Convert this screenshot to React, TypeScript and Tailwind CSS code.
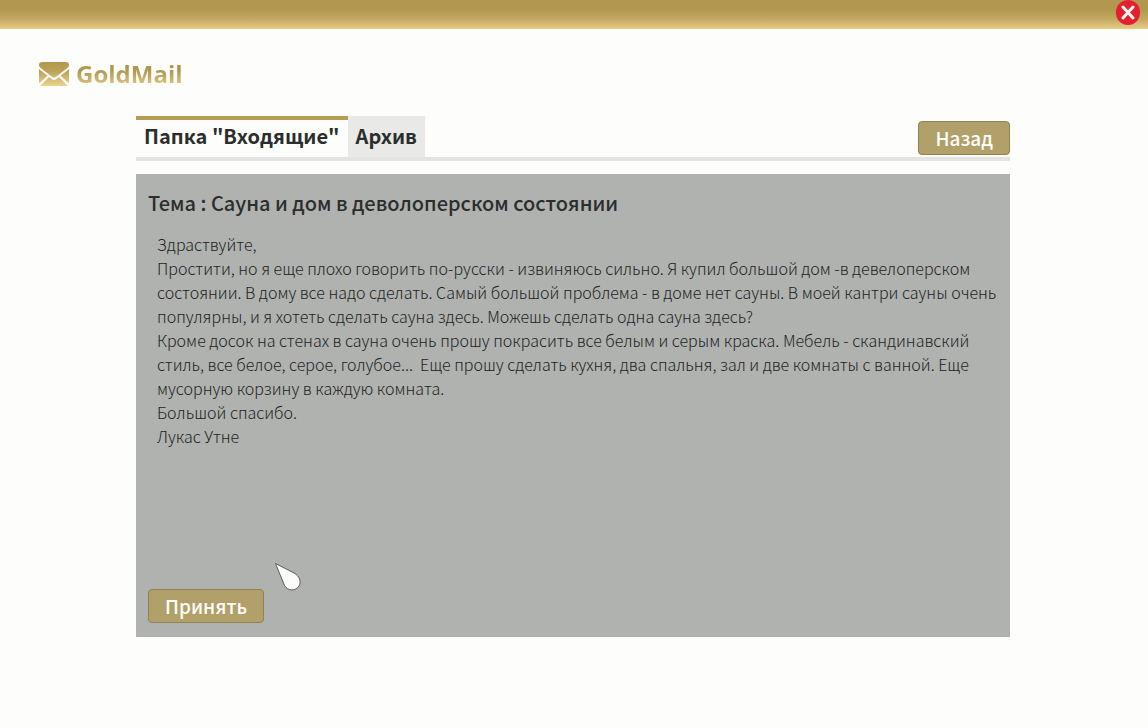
import { useState } from "react";
import clsx from "clsx";

interface IMessage {
  subject: string;
  lines: string[];
}

const message: IMessage = {
  subject: "Сауна и дом в деволоперском состоянии",
  lines: [
    "Здраствуйте,",
    "Простити, но я еще плохо говорить по-русски - извиняюсь сильно. Я купил большой дом -в девелоперском состоянии. В дому все надо сделать. Самый большой проблема - в доме нет сауны. В моей кантри сауны очень популярны, и я хотеть сделать сауна здесь. Можешь сделать одна сауна здесь?",
    "Кроме досок на стенах в сауна очень прошу покрасить все белым и серым краска. Мебель - скандинавский стиль, все белое, серое, голубое...  Еще прошу сделать кухня, два спальня, зал и две комнаты с ванной. Еще мусорную корзину в каждую комната.",
    "Большой спасибо.",
    "Лукас Утне",
  ],
};

const tabs = [
  { id: "inbox", label: 'Папка "Входящие"' },
  { id: "archive", label: "Архив" },
];

function EnvelopeIcon() {
  return (
    <svg width="30" height="24" viewBox="0 0 30 24" aria-hidden="true">
      <defs>
        <linearGradient id="gold" x1="0" y1="0" x2="0" y2="24" gradientUnits="userSpaceOnUse">
          <stop offset="0" stopColor="#b2984d" />
          <stop offset="0.4" stopColor="#bda35a" />
          <stop offset="1" stopColor="#ecd48e" />
        </linearGradient>
      </defs>
      <g fill="url(#gold)">
        <path d="M3 0H27Q30 0 30 3Q30 4.800 28.500 6L17.500 14.500Q15 16.300 12.500 14.500L1.500 6Q0 4.800 0 3Q0 0 3 0Z" />
        <path d="M0 7L8.500 13.800L0 21.500Z" />
        <path d="M30 7L21.500 13.800L30 21.500Z" />
        <path d="M10 15L12.500 17Q15 18.800 17.500 17L20 15L29 24H1Z" />
      </g>
    </svg>
  );
}

function GoldButton({ children }: { children: string }) {
  return (
    <button
      type="button"
      className="h-[34px] rounded-sm border border-[#8f8354] bg-[#b1a069] px-4 text-[19px] leading-8 font-medium text-[#fefefc]"
    >
      {children}
    </button>
  );
}

export default function App() {
  const [activeTab, setActiveTab] = useState("inbox");

  return (
    <div className="flex min-h-screen flex-col bg-[#fdfefc] font-['Noto_Sans_CJK_SC','Noto_Sans',sans-serif] text-[#2b2e2d]">
      {/* Window bar */}
      <header className="flex h-[29px] justify-end bg-linear-to-b from-[#b2984e] from-30% via-[#c2a75f] via-65% to-[#e6cc85] pr-2">
        <button
          type="button"
          aria-label="Закрыть"
          className="flex h-[25px] w-6 items-center justify-center rounded-full bg-[#e3202f]"
        >
          <svg width="14" height="16" viewBox="0 0 14 16" fill="none" stroke="#fdf4f2" strokeWidth="3" strokeLinecap="round">
            <path d="M2 2L12 13M12 2L2 13" />
          </svg>
        </button>
      </header>

      {/* Logo */}
      <div className="flex items-center gap-[7px] pt-[29px] pl-[39px]">
        <EnvelopeIcon />
        <span className="bg-linear-to-b from-[#b09852] from-40% to-[#e3cb86] to-90% bg-clip-text font-['Open_Sans','Noto_Sans',sans-serif] text-[24px] leading-8 font-bold text-transparent">
          GoldMail
        </span>
      </div>

      <main className="flex flex-1 flex-col pt-[26px] pr-[138px] pb-[91px] pl-[136px]">
        <nav className="flex items-end justify-between border-b-4 border-[#e3e3e1]">
          <div className="flex">
            {tabs.map((tab) => (
              <button
                key={tab.id}
                type="button"
                onClick={() => setActiveTab(tab.id)}
                className={clsx(
                  "h-[41px] border-t-4 px-2 pb-[6px] text-[20px] leading-[30px] font-bold",
                  activeTab === tab.id
                    ? "border-[#b59d54]"
                    : "border-[#e9e9e8] bg-[#e9e9e8]",
                )}
              >
                {tab.label}
              </button>
            ))}
          </div>
          <div className="flex pb-[2px]">
            <GoldButton>Назад</GoldButton>
          </div>
        </nav>

        {/* Opened message */}
        <article className="relative mt-[13px] flex flex-1 flex-col items-start bg-[#b0b2af] pt-[11px] pr-1 pb-[14px] pl-3">
          <h1 className="text-[20px] leading-9 font-medium">
            Тема : {message.subject}
          </h1>
          <div className="mt-[11px] mb-6 flex-1 pl-[9px] text-[16px] leading-6 font-light whitespace-pre-wrap text-[#1c1f1e]">
            {message.lines.map((line) => (
              <p key={line}>{line}</p>
            ))}
          </div>
          <GoldButton>Принять</GoldButton>

          {/* Pointer */}
          <svg
            className="pointer-events-none absolute bottom-[45px] left-[138px]"
            width="28"
            height="30"
            viewBox="0 0 28 30"
            aria-hidden="true"
          >
            <path
              d="M1.500 1.500L20 11C25.500 14 27.500 19.500 25 24C21.500 29.500 13.500 29 10.500 23.500Z"
              fill="#fcfcfb"
              stroke="#5c5e5c"
              strokeLinejoin="round"
            />
          </svg>
        </article>
      </main>
    </div>
  );
}
